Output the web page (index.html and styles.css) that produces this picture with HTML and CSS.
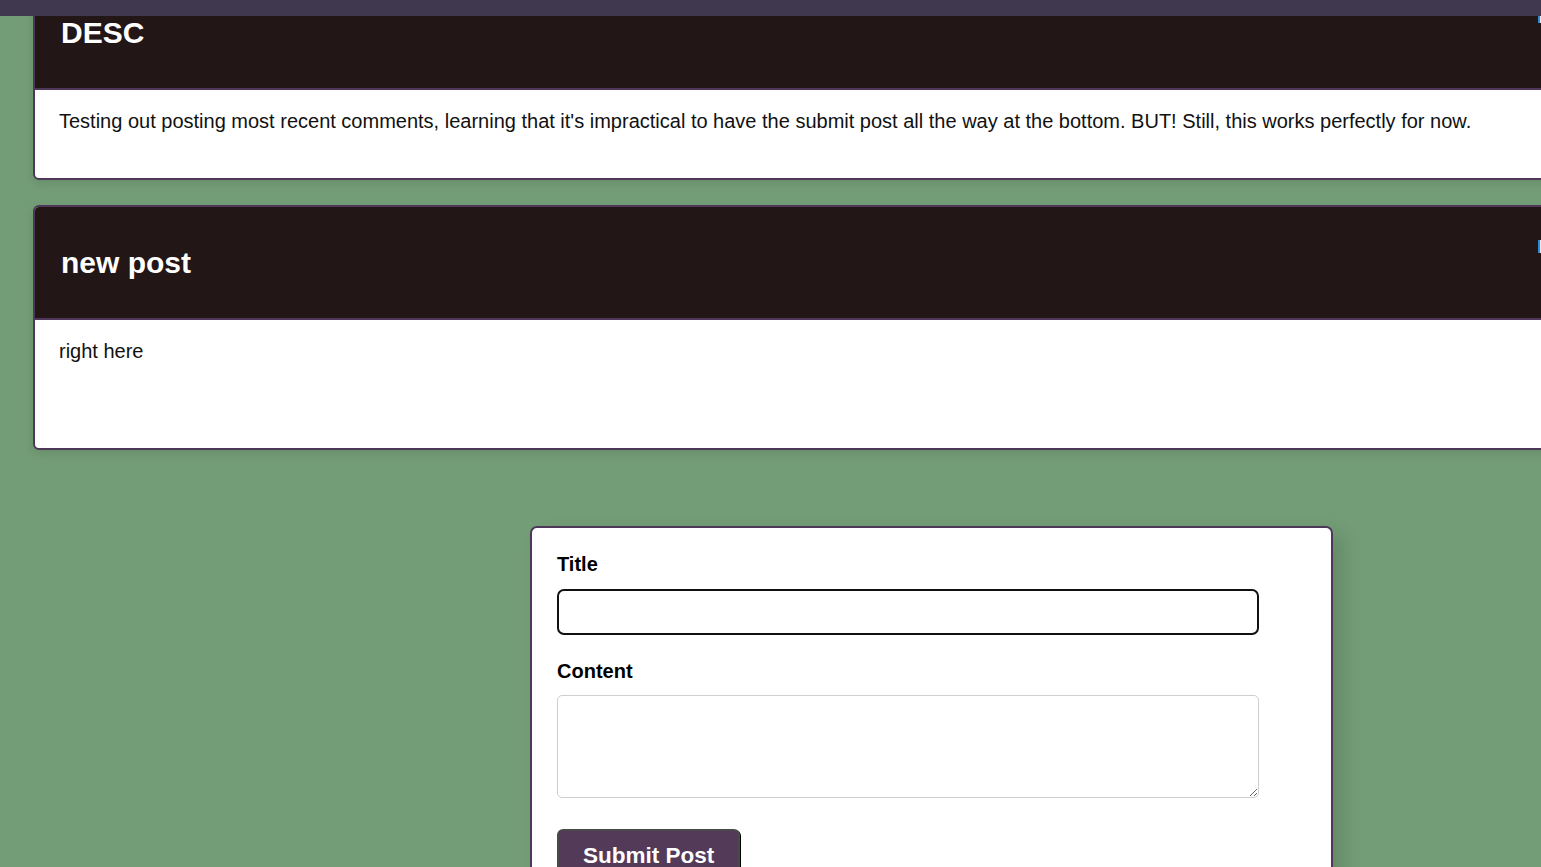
FILE: index.html
```html
<!DOCTYPE html>
<html lang="en">
<head>
<meta charset="utf-8">
<title>Posts</title>
<link rel="stylesheet" href="styles.css">
</head>
<body>
<nav class="topbar"></nav>
<main class="page">
  <section class="posts">
    <article class="post">
      <header class="post-head">
        <h2 class="post-title">DESC</h2>
        <button class="post-action" type="button"></button>
      </header>
      <div class="post-body">
        <p class="post-text">Testing out posting most recent comments, learning that it's impractical to have the submit post all the way at the bottom. BUT! Still, this works perfectly for now.</p>
      </div>
    </article>
    <article class="post">
      <header class="post-head">
        <h2 class="post-title">new post</h2>
        <button class="post-action" type="button"></button>
      </header>
      <div class="post-body post-body-tall">
        <p class="post-text">right here</p>
      </div>
    </article>
  </section>
  <form class="post-form">
    <label class="field-label" for="title">Title</label>
    <input class="field-input" id="title" type="text" autofocus>
    <label class="field-label field-label-second" for="content">Content</label>
    <textarea class="field-area" id="content"></textarea>
    <button class="submit-btn" type="button">Submit Post</button>
  </form>
</main>
</body>
</html>
```
FILE: styles.css
```css
html, body {
  margin: 0;
  padding: 0;
  overflow: hidden;
  height: 100%;
}
body {
  background: #739d76;
  font-family: "Liberation Sans", Arial, sans-serif;
  color: #111;
}
.topbar {
  position: fixed;
  top: 0;
  left: 0;
  right: 0;
  height: 16px;
  background: #3f384e;
  z-index: 10;
}
.page {
  margin-top: -25px;
  padding-left: 33px;
}
.posts {
  display: flex;
  flex-direction: column;
  gap: 25px;
}
.post {
  width: 1591px;
  box-sizing: border-box;
  border: 2px solid #4e3759;
  border-radius: 6px;
  background: #fff;
  overflow: hidden;
  box-shadow: 0 3px 8px rgba(0, 0, 0, 0.1);
}
.post-head {
  display: flex;
  align-items: flex-start;
  background: #221616;
  border-bottom: 2px solid #4e3759;
  padding: 39px 24px 38px 26px;
}
.post-title {
  flex: 1;
  margin: 0;
  color: #fff;
  font-size: 30px;
  font-weight: bold;
  line-height: 34px;
}
.post-action {
  width: 60px;
  height: 13px;
  margin-top: -6px;
  padding: 0;
  border: none;
  border-left: 2px solid #2b8bd6;
  background: #e8e8ea;
}
.post-body {
  padding: 20px 24px 45px;
}
.post-body-tall {
  padding-bottom: 85px;
}
.post-text {
  margin: 0;
  font-size: 20px;
  line-height: 23px;
  color: #111;
}
.post-form {
  display: flex;
  flex-direction: column;
  align-items: flex-start;
  width: 803px;
  box-sizing: border-box;
  margin: 76px 0 0 497px;
  padding: 25px 25px 25px;
  background: #fff;
  border: 2px solid #4e3759;
  border-radius: 7px;
  box-shadow: 10px 8px 18px rgba(0, 0, 0, 0.13);
}
.field-label {
  font-size: 20px;
  line-height: 23px;
  font-weight: bold;
  color: #000;
  margin-bottom: 13px;
}
.field-label-second {
  margin-top: 25px;
  margin-bottom: 12px;
}
.field-input {
  width: 702px;
  height: 46px;
  box-sizing: border-box;
  border: 2px solid #111;
  border-radius: 7px;
  padding: 0 11px;
  font-family: "Liberation Sans", Arial, sans-serif;
  font-size: 18px;
  outline: none;
  background: #fff;
  caret-color: #000;
}
.field-input:focus {
  outline: none;
}
.field-area {
  display: block;
  width: 702px;
  height: 103px;
  box-sizing: border-box;
  border: 1px solid #cfcfcf;
  border-radius: 5px;
  padding: 8px;
  font-family: "Liberation Sans", Arial, sans-serif;
  font-size: 16px;
  margin-bottom: 31px;
}
.submit-btn {
  background: #523a58;
  color: #fff;
  font-family: "Liberation Sans", Arial, sans-serif;
  font-weight: bold;
  font-size: 22.5px;
  padding: 12px 24px 10px;
  border: 2px solid #4a4a4a;
  border-radius: 6px;
  box-shadow: 1px 1px 0 #000;
}
```
